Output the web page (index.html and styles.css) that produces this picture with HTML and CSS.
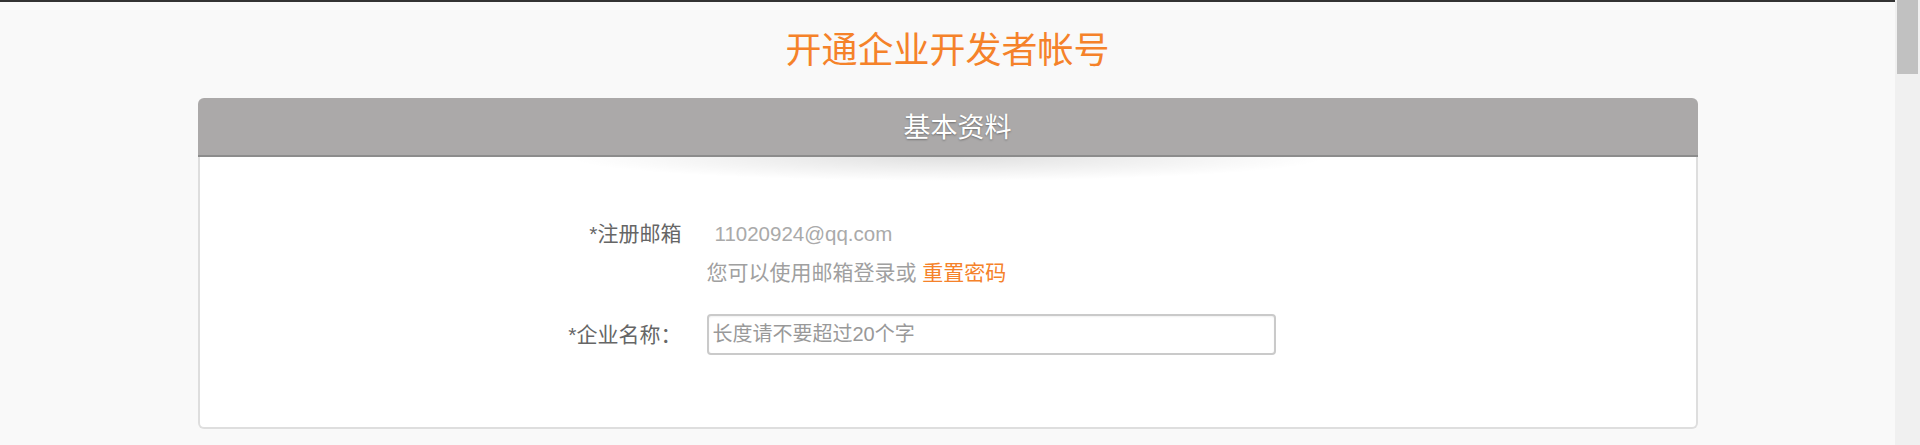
FILE: index.html
```html
<!DOCTYPE html>
<html lang="zh-CN">
<head>
<meta charset="utf-8">
<title>开通企业开发者帐号</title>
<link rel="stylesheet" href="styles.css">
</head>
<body>
<div class="page">
  <div class="topbar"></div>
  <h1 class="title">开通企业开发者帐号</h1>
  <section class="card">
    <div class="card-head">基本资料</div>
    <div class="card-body">
      <div class="shade"></div>
      <div class="form">
        <div class="row">
          <div class="label">*注册邮箱</div>
          <div class="value">11020924@qq.com</div>
        </div>
        <div class="row hint-row">
          <div class="label"></div>
          <div class="hint">您可以使用邮箱登录或 <a class="link" href="#">重置密码</a></div>
        </div>
        <div class="row input-row">
          <label class="label" for="company">*企业名称：</label>
          <input class="input" id="company" type="text" placeholder="长度请不要超过20个字">
        </div>
      </div>
    </div>
  </section>
</div>
<div class="scrollbar"><div class="thumb"></div></div>
</body>
</html>
```

FILE: styles.css
```css
html, body {
  height: 100%;
}
body {
  margin: 0;
  display: flex;
  overflow: hidden;
  background: #f9f9f9;
  font-family: "Liberation Sans", "Noto Sans CJK SC", sans-serif;
}
.page {
  flex: 1;
  min-width: 0;
}
.scrollbar {
  flex: 0 0 25px;
  box-sizing: border-box;
  padding: 0 2px;
  background: #f0f0f0;
}
.thumb {
  height: 74px;
  background: #c1c1c1;
}
.topbar {
  height: 2px;
  background: #333;
}
.title {
  margin: 0;
  padding: 24px 0 22px;
  line-height: 50px;
  font-size: 36px;
  font-weight: normal;
  color: #f5822a;
  text-align: center;
}
.card {
  width: 1500px;
  margin: 0 auto;
}
.card-head {
  height: 57px;
  line-height: 60px;
  padding-left: 20px;
  background: #aba9a9;
  border-bottom: 2px solid #8c8c8c;
  border-radius: 6px 6px 0 0;
  color: #fff;
  font-size: 27px;
  text-align: center;
  text-shadow: 0 1px 2px rgba(0, 0, 0, 0.35);
}
.card-body {
  background: #fff;
  border: 2px solid #dedede;
  border-top: 0;
  border-radius: 0 0 6px 6px;
  padding-bottom: 72px;
}
.shade {
  width: 760px;
  height: 24px;
  margin: 0 auto;
  background: radial-gradient(ellipse 50% 100% at 50% 0, rgba(0, 0, 0, 0.12), rgba(0, 0, 0, 0) 100%);
}
.form {
  margin-top: 38px;
}
.row {
  display: grid;
  grid-template-columns: 482px 569px;
  column-gap: 25px;
  align-items: center;
  line-height: 30px;
  font-size: 21px;
}
.label {
  text-align: right;
  color: #666;
}
.value {
  padding-left: 8px;
  color: #aaa;
  font-size: 20.5px;
}
.hint-row {
  margin-top: 9px;
}
.hint {
  color: #a0a0a0;
}
.link {
  color: #f5822a;
  text-decoration: none;
}
.input-row {
  margin-top: 26px;
}
.input {
  box-sizing: border-box;
  width: 569px;
  height: 41px;
  margin: 0;
  padding: 0 4px;
  border: 2px solid #cacaca;
  border-radius: 4px;
  box-shadow: inset 0 1px 2px rgba(0, 0, 0, 0.06);
  background: #fff;
  font-family: "Liberation Sans", "Noto Sans CJK SC", sans-serif;
  font-size: 20px;
  color: #555;
  outline: none;
}
.input::placeholder {
  color: #999;
}
```
